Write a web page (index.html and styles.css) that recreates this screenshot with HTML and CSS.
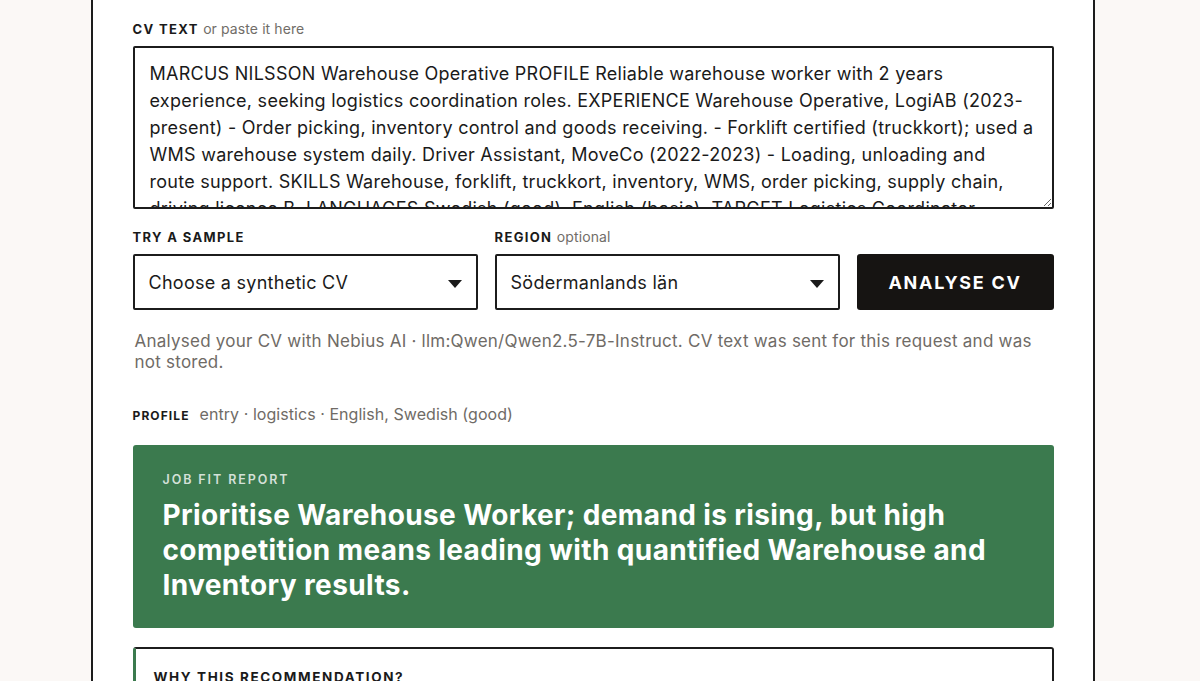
FILE: index.html
```html
<!DOCTYPE html>
<html lang="en">
<head>
<meta charset="utf-8">
<title>CV Job Fit</title>
<link rel="stylesheet" href="styles.css">
</head>
<body>
<div class="page">
  <main class="panel">
    <section class="field">
      <label class="label" for="cv">CV TEXT <span class="hint">or paste it here</span></label>
      <textarea id="cv" class="cv-text">MARCUS NILSSON Warehouse Operative PROFILE Reliable warehouse worker with 2 years experience, seeking logistics coordination roles. EXPERIENCE Warehouse Operative, LogiAB (2023-present) - Order picking, inventory control and goods receiving. - Forklift certified (truckkort); used a WMS warehouse system daily. Driver Assistant, MoveCo (2022-2023) - Loading, unloading and route support. SKILLS Warehouse, forklift, truckkort, inventory, WMS, order picking, supply chain, driving licence B. LANGUAGES Swedish (good), English (basic). TARGET Logistics Coordinator</textarea>
    </section>

    <section class="controls">
      <div class="control">
        <label class="label" for="sample">TRY A SAMPLE</label>
        <div class="select-wrap">
          <select id="sample" class="select">
            <option>Choose a synthetic CV</option>
          </select>
          <svg class="caret" width="14" height="8" viewBox="0 0 14 8"><path d="M0 0H14L7 8Z" fill="#1a1a1a"/></svg>
        </div>
      </div>
      <div class="control">
        <label class="label" for="region">REGION <span class="hint">optional</span></label>
        <div class="select-wrap">
          <select id="region" class="select">
            <option>Södermanlands län</option>
          </select>
          <svg class="caret" width="14" height="8" viewBox="0 0 14 8"><path d="M0 0H14L7 8Z" fill="#1a1a1a"/></svg>
        </div>
      </div>
      <div class="control control-btn">
        <button class="analyse" type="button">ANALYSE CV</button>
      </div>
    </section>

    <p class="note">Analysed your CV with Nebius AI · llm:Qwen/Qwen2.5-7B-Instruct. CV text was sent for this request and was not stored.</p>

    <p class="profile"><span class="profile-key">PROFILE</span><span class="profile-val">entry · logistics · English, Swedish (good)</span></p>

    <section class="report">
      <div class="report-kicker">JOB FIT REPORT</div>
      <h1 class="report-title">Prioritise Warehouse Worker; demand is rising, but high competition means leading with quantified Warehouse and Inventory results.</h1>
    </section>

    <section class="why">
      <h2 class="why-title">WHY THIS RECOMMENDATION?</h2>
    </section>
  </main>
</div>
</body>
</html>
```

FILE: styles.css
```css
* { box-sizing: border-box; }

html, body {
  margin: 0;
  padding: 0;
  background: #fbf8f6;
  font-family: Inter, "Noto Sans", "Liberation Sans", sans-serif;
  color: #1a1a1a;
}

.page {
  width: 1185px;
  height: 681px;
  overflow: hidden;
  display: flex;
  justify-content: center;
}

.panel {
  width: 1004px;
  background: #ffffff;
  border-left: 2px solid #1c1c1c;
  border-right: 2px solid #1c1c1c;
  padding: 20px 39px 40px 40px;
}

.label {
  display: block;
  font-size: 13px;
  line-height: 18px;
  font-weight: 700;
  letter-spacing: 1.35px;
  margin-bottom: 8px;
  color: #1a1a1a;
}

.hint {
  font-size: 14px;
  font-weight: 400;
  letter-spacing: 0.1px;
  color: #716d68;
}

.cv-text {
  display: block;
  width: 100%;
  height: 163px;
  margin: 0;
  border: 2px solid #1c1c1c;
  border-radius: 2px;
  padding: 12px 16px 12px 15px;
  font-family: Inter, "Noto Sans", "Liberation Sans", sans-serif;
  font-size: 18px;
  line-height: 27px;
  letter-spacing: 0.26px;
  color: #1a1a1a;
  background: #fff;
  overflow: hidden;
  resize: vertical;
}

.controls {
  display: grid;
  grid-template-columns: 345px 345px 197px;
  column-gap: 17px;
  margin-top: 19px;
}

.control-btn {
  display: flex;
  align-items: flex-end;
}

.select-wrap {
  position: relative;
}

.select {
  display: block;
  width: 100%;
  height: 56px;
  margin: 0;
  appearance: none;
  -webkit-appearance: none;
  border: 2px solid #1c1c1c;
  border-radius: 2px;
  background: #fff;
  padding: 0 40px 0 14px;
  font-family: Inter, "Noto Sans", "Liberation Sans", sans-serif;
  font-size: 18px;
  letter-spacing: 0.27px;
  color: #1a1a1a;
}

.caret {
  position: absolute;
  right: 16px;
  top: 26px;
  pointer-events: none;
}

.analyse {
  width: 100%;
  height: 56px;
  margin: 0;
  border: none;
  border-radius: 3px;
  background: #161412;
  color: #ffffff;
  font-family: Inter, "Noto Sans", "Liberation Sans", sans-serif;
  font-size: 18px;
  font-weight: 700;
  letter-spacing: 1.7px;
}

.note {
  margin: 21px 0 0;
  font-size: 17px;
  line-height: 21px;
  letter-spacing: 0.24px;
  color: #6f6b66;
  padding-left: 2px;
}

.profile {
  margin: 31px 0 0;
  display: flex;
  align-items: baseline;
  gap: 10px;
  line-height: 21px;
}

.profile-key {
  font-size: 12px;
  font-weight: 700;
  letter-spacing: 1.1px;
  color: #1a1a1a;
}

.profile-val {
  font-size: 16px;
  letter-spacing: 0.05px;
  color: #6f6b66;
}

.report {
  margin-top: 19px;
  background: #3b7a4e;
  border-radius: 3px;
  padding: 27px 30px 25px;
  color: #ffffff;
}

.report-kicker {
  font-size: 12.5px;
  line-height: 16px;
  font-weight: 600;
  letter-spacing: 1.9px;
  color: rgba(255, 255, 255, 0.78);
}

.report-title {
  margin: 10px 0 0;
  font-size: 28px;
  line-height: 35px;
  font-weight: 700;
  letter-spacing: 0.38px;
  color: #ffffff;
}

.why {
  margin-top: 19px;
  border: 2px solid #1c1c1c;
  border-left: 3px solid #3b7a4e;
  border-radius: 3px;
  padding: 19px 18px 20px;
  min-height: 120px;
}

.why-title {
  margin: 0;
  font-size: 13.5px;
  line-height: 18px;
  font-weight: 700;
  letter-spacing: 1.6px;
  color: #1a1a1a;
}
```
